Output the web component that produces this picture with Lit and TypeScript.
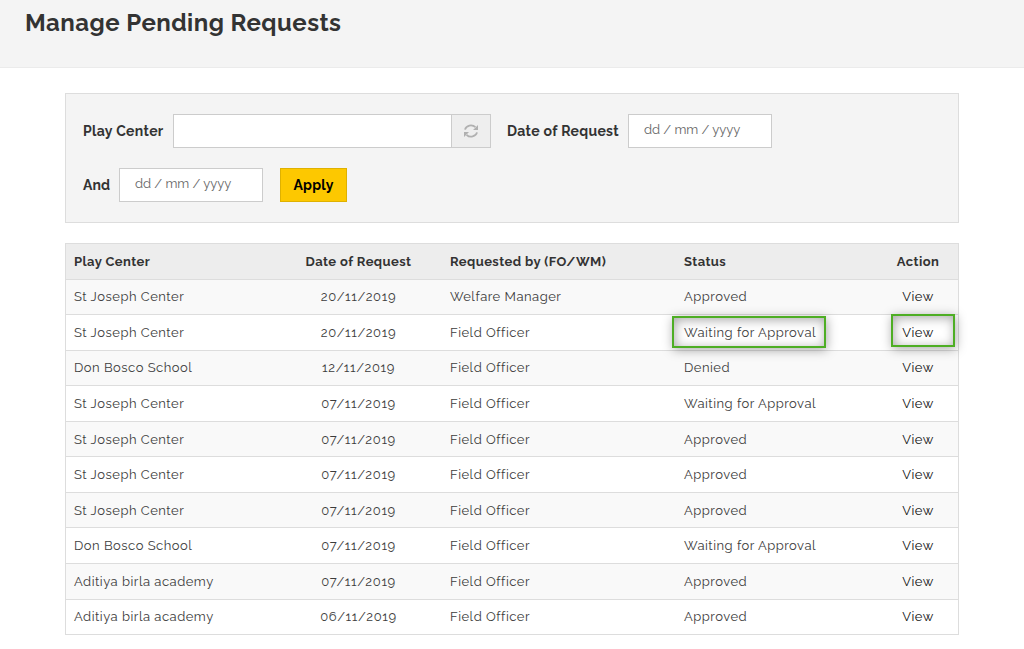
import { LitElement, html, css } from "lit";
import { customElement } from "lit/decorators.js";

const ROWS: string[][] = [
  ["St Joseph Center", "20/11/2019", "Welfare Manager", "Approved"],
  ["St Joseph Center", "20/11/2019", "Field Officer", "Waiting for Approval"],
  ["Don Bosco School", "12/11/2019", "Field Officer", "Denied"],
  ["St Joseph Center", "07/11/2019", "Field Officer", "Waiting for Approval"],
  ["St Joseph Center", "07/11/2019", "Field Officer", "Approved"],
  ["St Joseph Center", "07/11/2019", "Field Officer", "Approved"],
  ["St Joseph Center", "07/11/2019", "Field Officer", "Approved"],
  ["Don Bosco School", "07/11/2019", "Field Officer", "Waiting for Approval"],
  ["Aditiya birla academy", "07/11/2019", "Field Officer", "Approved"],
  ["Aditiya birla academy", "06/11/2019", "Field Officer", "Approved"],
];

@customElement("app-root")
export class AppRoot extends LitElement {
  static styles = css`
    :host { display: block; height: 649px; overflow: hidden; background: #fff; color: #333;
      font-family: Raleway, Lato, "Open Sans", sans-serif; font-size: 14px; }
    * { box-sizing: border-box; }
    .top { height: 68px; padding: 7px 0 0 25px; background: #f4f4f4; border-bottom: 1px solid #ebebeb; }
    .title { margin: 0; line-height: 32px; font-size: 24px; font-weight: 700; letter-spacing: .46px; }
    .page { padding: 25px 65px 0; }
    .filters { width: 894px; height: 130px; padding: 20px 17px; background: #f4f4f4;
      border: 1px solid #ddd; display: flex; flex-direction: column; gap: 20px; }
    .line { display: flex; height: 34px; align-items: center; }
    .label { line-height: 34px; font-weight: 700; white-space: nowrap; letter-spacing: .32px; }
    .play { width: 90px; }
    .date { width: 121px; margin-left: 16px; }
    .and { width: 36px; letter-spacing: .1px; }
    .group { display: flex; width: 318px; height: 34px; border: 1px solid #ccc; background: #fff; }
    .input { flex: 1; }
    .addon { width: 39px; border-left: 1px solid #ccc; background: #eee; display: flex;
      align-items: center; justify-content: center; }
    .field { width: 144px; height: 34px; padding-left: 15px; border: 1px solid #ccc; background: #fff;
      color: #666; line-height: 29px; font-size: 13px; letter-spacing: -.05px; }
    .apply { width: 67px; height: 34px; margin-left: 17px; border: 1px solid #dfb100; background: #fdc800;
      color: #000; line-height: 32px; text-align: center; font-weight: 700; letter-spacing: .25px; }
    .table { width: 894px; margin-top: 20px; border: 1px solid #ddd; border-top: 0; letter-spacing: .5px; }
    .row { display: grid; grid-template-columns: 209px 167px 234px 179px 103px; height: 35.56px;
      border-top: 1px solid #ddd; padding-top: 1px; align-items: center; font-size: 13px; line-height: 20px; color: #3c3c3c; }
    .row:nth-child(even) { background: #f9f9f9; }
    .head { height: 35.6px; background: #ededed; color: #333; font-weight: 700; letter-spacing: .42px; }
    .cell { padding-left: 8px; position: relative; white-space: nowrap; }
    .mid { text-align: center; padding-left: 0; }
    .day { letter-spacing: .65px; }
    .act { padding-left: 23px; text-align: center; }
    .link { color: #111; }
    .mark { position: absolute; border: 2px solid #4eae24; pointer-events: none;
      box-shadow: 1px 2px 11px rgba(0,0,0,.34), inset 1px 2px 11px rgba(0,0,0,.34); }
    .mark-status { left: -4px; top: -7px; width: 154px; height: 32px; }
    .mark-view { left: 36px; top: -9px; width: 64px; height: 33px; z-index: 1; }
  `;

  render() {
    return html`
      <header class="top"><h1 class="title">Manage Pending Requests</h1></header>
      <main class="page">
        <section class="filters">
          <div class="line">
            <div class="label play">Play Center</div>
            <div class="group">
              <div class="input"></div>
              <div class="addon">
                <svg width="14" height="14" viewBox="0 0 14 14" fill="none" stroke="#b0b0b0" stroke-width="1.8">
                  <path d="M1 5.6A6 5.4 0 0 1 11.4 3.2"/><path d="M13 8.4A6 5.4 0 0 1 2.6 10.8"/>
                  <path d="M14 1v5H9ZM0 13V8h5Z" fill="#b0b0b0" stroke="none"/>
                </svg>
              </div>
            </div>
            <div class="label date">Date of Request</div>
            <div class="field">dd / mm / yyyy</div>
          </div>
          <div class="line">
            <div class="label and">And</div>
            <div class="field">dd / mm / yyyy</div>
            <div class="apply">Apply</div>
          </div>
        </section>
        <section class="table">
          <div class="row head">
            <div class="cell">Play Center</div>
            <div class="cell mid">Date of Request</div>
            <div class="cell">Requested by (FO/WM)</div>
            <div class="cell">Status</div>
            <div class="cell act">Action</div>
          </div>
          ${ROWS.map((r, i) => html`
            <div class="row">
              <div class="cell">${r[0]}</div>
              <div class="cell mid day">${r[1]}</div>
              <div class="cell">${r[2]}</div>
              <div class="cell">${r[3]}${i === 1 ? html`<span class="mark mark-status"></span>` : ""}</div>
              <div class="cell act link">View${i === 1 ? html`<span class="mark mark-view"></span>` : ""}</div>
            </div>`)}
        </section>
      </main>`;
  }
}
